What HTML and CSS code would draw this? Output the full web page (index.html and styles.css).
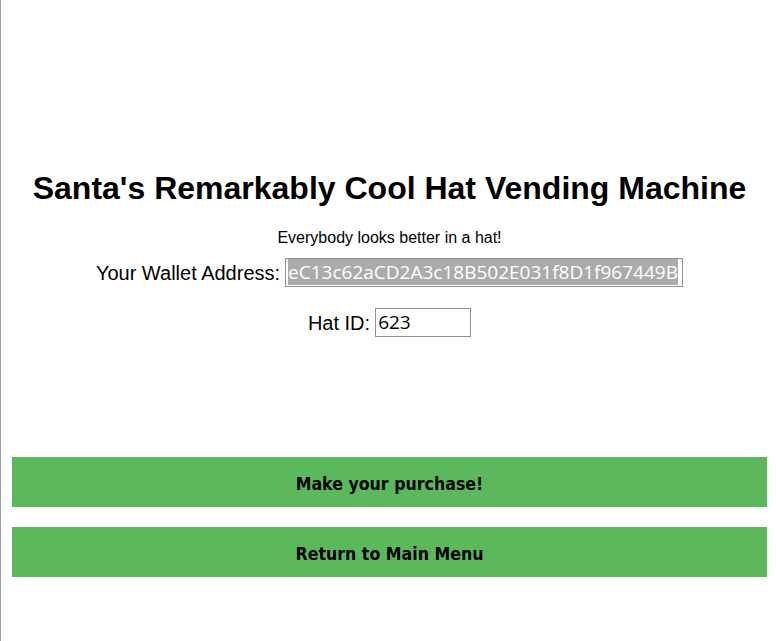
FILE: index.html
```html
<!DOCTYPE html>
<html>
<head>
<meta charset="utf-8">
<link rel="stylesheet" href="styles.css">
</head>
<body>
<div class="page">
  <h1 class="title">Santa's Remarkably Cool Hat Vending Machine</h1>
  <p class="tagline">Everybody looks better in a hat!</p>
  <div class="field">
    <label class="label">Your Wallet Address:</label>
    <div class="input wallet"><span class="sel">eC13c62aCD2A3c18B502E031f8D1f967449B</span></div>
  </div>
  <div class="field hat-field">
    <label class="label">Hat ID:</label>
    <div class="input hat">623</div>
  </div>
  <div class="actions">
    <button class="btn">Make your purchase!</button>
    <button class="btn">Return to Main Menu</button>
  </div>
</div>
</body>
</html>
```

FILE: styles.css
```css
html, body {
  margin: 0;
  padding: 0;
  background: #fff;
}
body {
  border-left: 1px solid #a0a0a0;
  min-height: 641px;
  box-sizing: border-box;
  font-family: "Liberation Sans", Arial, sans-serif;
  color: #000;
}
.page {
  padding: 170px 9px 0 11px;
  display: flex;
  flex-direction: column;
  align-items: center;
}
.title {
  margin: 0;
  font-size: 32px;
  font-weight: bold;
  line-height: 36px;
}
.tagline {
  margin: 22px 0 0 0;
  font-size: 16px;
  line-height: 20px;
}
.field {
  margin-top: 10px;
  display: flex;
  align-items: center;
  gap: 5px;
}
.hat-field {
  margin-top: 21px;
}
.label {
  font-size: 20px;
  line-height: 24px;
}
.input {
  box-sizing: border-box;
  height: 29px;
  border: 1px solid #8f8f9d;
  font-family: "Open Sans", "Segoe UI", sans-serif;
  font-size: 19px;
  line-height: 27px;
  padding: 0 2px;
  overflow: hidden;
  white-space: nowrap;
}
.wallet {
  width: 398px;
  color: #fff;
}
.sel {
  background: #ababab;
  color: #fff;
}
.hat {
  width: 96px;
}
.actions {
  align-self: stretch;
  margin-top: 120px;
  display: flex;
  flex-direction: column;
  gap: 20px;
}
.btn {
  height: 50px;
  border: 0;
  background: #5cb85c;
  color: #000;
  font-family: "DejaVu Sans Condensed", "DejaVu Sans", Verdana, sans-serif;
  font-stretch: condensed;
  font-weight: bold;
  font-size: 17.6px;
  padding: 3px 0 0 0;
}
```
